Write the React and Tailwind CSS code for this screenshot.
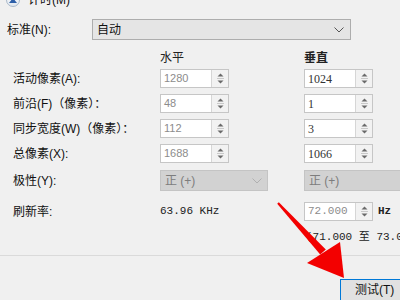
import React from "react";

const Spin = ({ value, dim, mono }) => {
  return (
    <div className="w-[69px] h-[19px] shrink-0 flex border border-[#c6c6c6] bg-white">
      <div
        className={`flex-1 flex items-center pl-[3px] ${
          dim ? "text-[#8c8c8c]" : "text-[#333]"
        } ${
          mono
            ? "font-['Liberation_Mono',monospace] text-[11px]"
            : dim
            ? "font-['Liberation_Sans',sans-serif] text-[11px]"
            : "font-['Liberation_Serif',serif] text-[12px]"
        }`}
      >
        {value}
      </div>
      <div className="w-[17px] border-l border-[#d6d6d6] bg-[#f2f2f2] flex items-center justify-center">
        <svg width="7" height="11" viewBox="0 0 7 11">
          <polygon points="3.5,0.5 6.5,3.5 0.5,3.5" fill="#6a6a6a" />
          <line x1="0" y1="5.5" x2="7" y2="5.5" stroke="#c8c8c8" strokeWidth="1" />
          <polygon points="0.5,7.5 6.5,7.5 3.5,10.5" fill="#6a6a6a" />
        </svg>
      </div>
    </div>
  );
};

const Chevron = ({ color }) => (
  <svg width="10" height="6" viewBox="0 0 10 6">
    <polyline points="0.5,0.5 5,5 9.5,0.5" fill="none" stroke={color} strokeWidth="1" />
  </svg>
);

const rows = [
  { label: "活动像素(A):", h: "1280", v: "1024" },
  { label: "前沿(F)（像素）：", h: "48", v: "1" },
  { label: "同步宽度(W)（像素）：", h: "112", v: "3" },
  { label: "总像素(X):", h: "1688", v: "1066" },
];

export default function App() {
  return (
    <div className="relative w-[400px] h-[300px] overflow-hidden bg-[#f0f0f0] text-[12px] text-[#111] font-['Liberation_Sans','Noto_Sans_CJK_SC',sans-serif]">
      {/* collapse header */}
      <div className="-mt-[7px] h-[14px] flex items-center pl-[6px] gap-[8px]">
        <div className="w-[14px] h-[14px] rounded-full border border-[#a9b8c9] bg-gradient-to-b from-white to-[#dfe6ee] flex items-center justify-center">
          <svg width="8" height="5" viewBox="0 0 8 5">
            <polygon points="4,0 8,5 0,5" fill="#2d5fa8" />
          </svg>
        </div>
        <span className="leading-none">计时(M)</span>
      </div>

      {/* standard */}
      <div className="mt-[12px] h-[21px] flex items-center pl-[7px]">
        <div className="w-[85px] shrink-0">标准(N):</div>
        <div className="w-[259px] shrink-0 h-[21px] border border-[#adadad] bg-[#e5e5e5] flex items-center justify-between pl-[4px] pr-[6px]">
          <span>自动</span>
          <Chevron color="#555" />
        </div>
      </div>

      {/* column headers */}
      <div className="mt-[10px] h-[16px] flex items-center pl-[160px] text-[#222]">
        <div className="w-[144px] shrink-0">水平</div>
        <div className="font-bold">垂直</div>
      </div>

      {/* spin rows */}
      <div className="mt-[3px] flex flex-col gap-[6px]">
        {rows.map((r) => (
          <div key={r.label} className="h-[19px] flex items-center">
            <div className="w-[160px] shrink-0 pl-[13px] whitespace-nowrap">{r.label}</div>
            <Spin value={r.h} dim />
            <div className="w-[75px] shrink-0" />
            <Spin value={r.v} />
          </div>
        ))}
      </div>

      {/* polarity */}
      <div className="mt-[7px] h-[21px] flex items-center">
        <div className="w-[160px] shrink-0 pl-[13px]">极性(Y):</div>
        <div className="w-[108px] shrink-0 h-[21px] border border-[#c4c4c4] bg-[#d2d2d2] flex items-center justify-between pl-[4px] pr-[5px] text-[#7d7d7d]">
          <span>正 (+)</span>
          <Chevron color="#b0b0b0" />
        </div>
        <div className="w-[36px] shrink-0" />
        <div className="w-[110px] shrink-0 h-[21px] border border-[#c4c4c4] bg-[#d2d2d2] flex items-center pl-[4px] text-[#7d7d7d]">
          <span>正 (+)</span>
        </div>
      </div>

      {/* refresh */}
      <div className="mt-[11px] h-[19px] flex items-center">
        <div className="w-[160px] shrink-0 pl-[13px]">刷新率:</div>
        <div className="w-[144px] shrink-0 font-['Liberation_Mono',monospace] text-[11px] text-[#222]">
          63.96 KHz
        </div>
        <Spin value="72.000" dim mono />
        <div className="ml-[5px] font-['Liberation_Mono',monospace] text-[11px] font-bold text-[#222]">
          Hz
        </div>
      </div>

      {/* range */}
      <div className="mt-[9px] h-[14px] flex items-center pl-[306px] whitespace-nowrap font-['Liberation_Mono','Noto_Sans_CJK_SC',monospace] text-[11px] text-[#222]">
        (71.000 至 73.000)
      </div>

      <div className="mt-[11px] h-px bg-[#dadada]" />

      {/* button */}
      <div className="mt-[23px] flex pl-[340px]">
        <div className="w-[80px] h-[22px] shrink-0 border border-[#0078d7] bg-[#e1e1e1] flex items-center pl-[14px]">
          测试(T)
        </div>
      </div>

      {/* red annotation arrow */}
      <svg className="absolute left-0 top-0 pointer-events-none" width="400" height="300" viewBox="0 0 400 300">
        <polygon points="278.8,202.2 325.8,249.4 320.2,254.6 277.2,203.8" fill="#f30000" />
        <polygon points="307,263 340,242 344,278" fill="#f30000" />
      </svg>
    </div>
  );
}
